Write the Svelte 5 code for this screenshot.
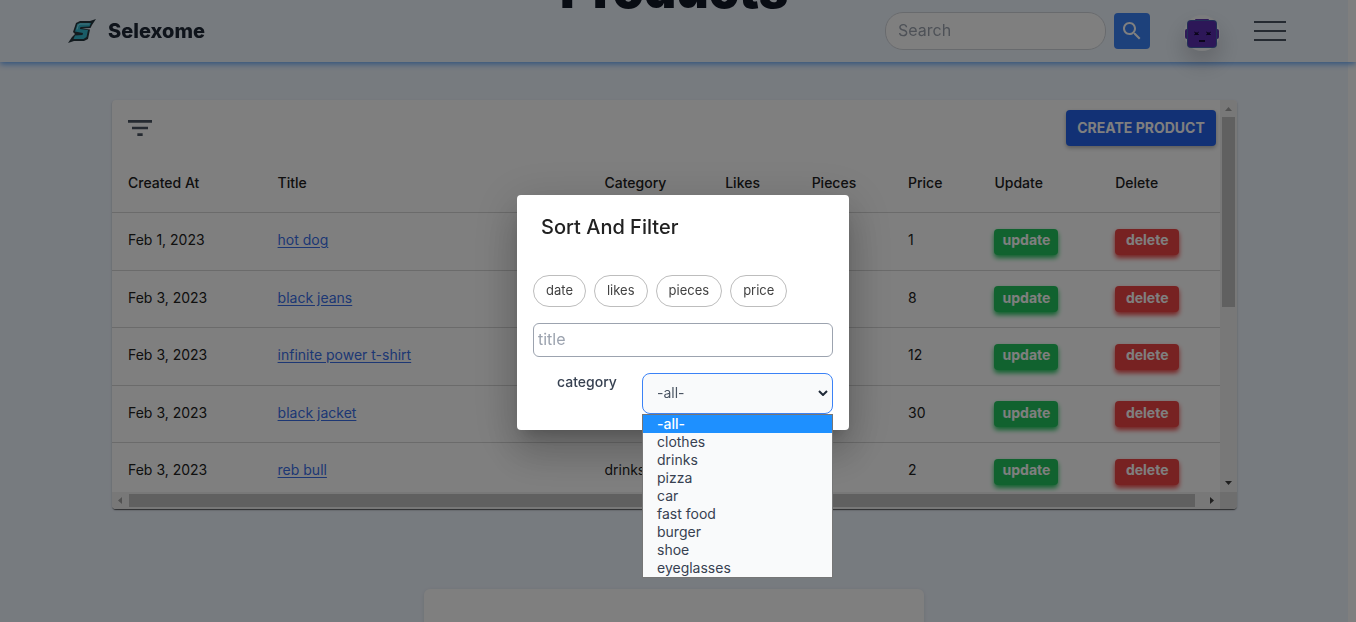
<script>
  const products = [
    { created: 'Feb 1, 2023', title: 'hot dog', category: '', price: 1 },
    { created: 'Feb 3, 2023', title: 'black jeans', category: '', price: 8 },
    { created: 'Feb 3, 2023', title: 'infinite power t-shirt', category: '', price: 12 },
    { created: 'Feb 3, 2023', title: 'black jacket', category: '', price: 30 },
    { created: 'Feb 3, 2023', title: 'reb bull', category: 'drinks', price: 2 }
  ];
  const sorts = ['date', 'likes', 'pieces', 'price'];
  const categories = ['-all-', 'clothes', 'drinks', 'pizza', 'car', 'fast food', 'burger', 'shoe', 'eyeglasses'];

  let search = $state('');
  let title = $state('');
  let category = $state('-all-');
</script>

<div class="page">
  <header>
    <a class="brand" href="#home">
      <svg class="logo" viewBox="0 0 28 24" aria-hidden="true">
        <path d="M28 0 24 6 22.500 9 14 9.500 22 10.500 20 20 16 22 6 22 0 24 4 18 7 15 5 13 8 4 12 2 22 2Z" fill="#26373f" />
        <path d="M23 4 21.500 7.500 12.500 8 11.800 10 20 11 18.500 18 15.500 20 5.500 20 7 16.500 14.500 16 15 14 7 12.500 9.300 5 12 4Z" fill="#35b8cf" />
        <path d="M21.500 5 12 5 10.300 6 9 10.500" fill="none" stroke="#8ee6f5" stroke-width="1" />
      </svg>
      <span>Selexome</span>
    </a>
    <form class="search" onsubmit={(e) => e.preventDefault()}>
      <input type="search" placeholder="Search" aria-label="Search" bind:value={search} />
      <button aria-label="Submit search">
        <svg viewBox="0 0 24 24" width="24" height="24" aria-hidden="true">
          <path fill="#fff" d="M15.5 14h-.79l-.28-.27C15.410 12.590 16 11.110 16 9.500 16 5.910 13.090 3 9.500 3S3 5.910 3 9.500 5.910 16 9.500 16c1.610 0 3.090-.59 4.230-1.570l.27.28v.79l5 4.990L20.490 19l-4.990-5zm-6 0C7.010 14 5 11.990 5 9.500S7.010 5 9.500 5 14 7.010 14 9.500 11.990 14 9.500 14z" />
        </svg>
      </button>
    </form>
    <button class="avatar" aria-label="Account">
      <svg viewBox="0 0 36 36" width="36" height="36" aria-hidden="true">
        <rect x="1" y="14" width="34" height="10" rx="2" fill="#5e35b1" />
        <rect x="11" y="4" width="14" height="5" rx="1" fill="#5e35b1" />
        <rect x="3" y="5" width="30" height="28" rx="4" fill="#4560ae" />
        <rect x="4" y="6" width="28" height="26" rx="3" fill="#5a2fb0" />
        <path d="M10 17l3 1-3 2M15 17l-2 1 2 2M22 17l3 1-3 2M27 17l-2 1 2 2M15 26h6" fill="none" stroke="#24104f" stroke-width="1" />
        <path d="M11 19h3M23 19h3M15 26h6" fill="none" stroke="#160a38" stroke-width="2" />
      </svg>
    </button>
    <button class="menu" aria-label="Menu"><i></i><i></i><i></i></button>
  </header>

  <main>
    <h1>Products</h1>

    <section class="card">
      <div class="content">
        <div class="toolbar">
          <button class="filter" aria-label="Sort and filter">
            <svg viewBox="0 0 24 24" width="32" height="32" aria-hidden="true">
              <path fill="#4b5563" d="M10 18h4v-2h-4v2zM3 6v2h18V6H3zm3 7h12v-2H6v2z" />
            </svg>
          </button>
          <button class="create">CREATE PRODUCT</button>
        </div>
        <table>
          <colgroup>
            <col class="c-date" /><col class="c-title" /><col class="c-wide" /><col class="c-slim" />
            <col class="c-mid" /><col class="c-slim" /><col class="c-wide" /><col class="c-wide" />
          </colgroup>
          <thead>
            <tr>
              <th>Created At</th><th>Title</th><th>Category</th><th>Likes</th>
              <th>Pieces</th><th>Price</th><th>Update</th><th>Delete</th>
            </tr>
          </thead>
          <tbody>
            {#each products as p}
              <tr>
                <td>{p.created}</td>
                <td><a href="#product">{p.title}</a></td>
                <td>{p.category}</td>
                <td></td>
                <td></td>
                <td>{p.price}</td>
                <td><button class="action update">update</button></td>
                <td><button class="action delete">delete</button></td>
              </tr>
            {/each}
          </tbody>
        </table>
      </div>
      <div class="bar vertical" aria-hidden="true">
        <svg viewBox="0 0 17 17"><path d="M5 11h7L8.500 7z" fill="#a3a3a3" /></svg>
        <div class="rail"><div class="thumb"></div></div>
        <svg viewBox="0 0 17 17"><path d="M5 6h7L8.500 10z" fill="#404040" /></svg>
      </div>
      <div class="bar horizontal" aria-hidden="true">
        <svg viewBox="0 0 17 17"><path d="M10 5v7L6 8.500z" fill="#a3a3a3" /></svg>
        <div class="rail"><div class="thumb"></div></div>
        <svg viewBox="0 0 17 17"><path d="M7 5v7l4-3.500z" fill="#404040" /></svg>
      </div>
      <div class="corner"></div>
    </section>

    <section class="next-card"></section>
  </main>
</div>

<div class="backdrop">
  <div class="dialog" role="dialog" aria-modal="true" aria-labelledby="dialog-title">
    <h2 id="dialog-title">Sort And Filter</h2>
    <div class="fields">
      <div class="chips">
        {#each sorts as sort}
          <button>{sort}</button>
        {/each}
      </div>
      <input class="title" type="text" placeholder="title" aria-label="title" bind:value={title} />
      <div class="category">
        <label for="category">category</label>
        <div class="picker">
          <select id="category" bind:value={category}>
            {#each categories as c}
              <option value={c}>{c}</option>
            {/each}
          </select>
          <svg class="chevron" viewBox="0 0 10 6" aria-hidden="true">
            <path d="M1 1l4 4 4-4" fill="none" stroke="#1f2937" stroke-width="2" />
          </svg>
          <ul role="listbox" aria-label="category options">
            {#each categories as c}
              <li role="option" aria-selected={c === category}>{c}</li>
            {/each}
          </ul>
        </div>
      </div>
    </div>
  </div>
</div>

<style>
  :global(body) {
    margin: 0;
    font-family: Inter, Roboto, sans-serif;
    font-size: 14px;
    color: #212121;
    background: #eff6ff;
  }
  * { box-sizing: border-box; }
  button, input, select { font: inherit; margin: 0; }
  button { border: 0; padding: 0; cursor: pointer; }
  svg { display: block; }

  .page {
    display: flow-root;
    height: 100vh;
    overflow: hidden;
    border-right: 8px solid #fff;
  }

  header {
    position: fixed;
    inset: 0 0 auto 0;
    height: 62px;
    padding: 0 70px 0 68px;
    display: flex;
    align-items: center;
    box-shadow: 0 2px 6px #60a5fa;
  }
  .brand {
    display: flex;
    align-items: center;
    gap: 12px;
    margin-right: auto;
    font-size: 20px;
    font-weight: 800;
    color: #1f2937;
    text-decoration: none;
  }
  .logo { width: 28px; height: 24px; }
  .search { display: flex; align-items: center; gap: 8px; }
  .search input {
    width: 221px;
    height: 38px;
    padding: 0 12px 2px;
    border: 1px solid #d1d5db;
    border-radius: 18px;
    background: #fff;
    font-size: 16px;
    outline: 0;
  }
  input::placeholder { color: #9ca3af; opacity: 1; }
  .search button {
    width: 36px;
    height: 36px;
    display: grid;
    place-items: center;
    border-radius: 4px;
    background: #3b82f6;
  }
  .avatar {
    width: 36px;
    height: 36px;
    margin: 4px 34px 0;
    border-radius: 50%;
    background: #f8fafc;
    box-shadow: 0 12px 24px rgba(0, 0, 0, 0.2);
  }
  .menu {
    width: 32px;
    display: grid;
    gap: 7px;
    background: none;
  }
  .menu i { height: 2px; background: #4b5563; }

  main { margin-top: -38px; }
  h1 {
    margin: 0 0 82px;
    text-align: center;
    font-size: 50px;
    line-height: 56px;
    font-weight: 900;
    color: #111827;
  }

  .card {
    margin: 0 111px 0 112px;
    display: grid;
    grid-template: 392px 17px / minmax(0, 1fr) 17px;
    overflow: hidden;
    border-radius: 4px;
    background: #fff;
    box-shadow: 0 2px 1px -1px rgba(0, 0, 0, 0.4), 0 1px 1px rgba(0, 0, 0, 0.3), 0 1px 3px rgba(0, 0, 0, 0.12);
  }
  .content { overflow: hidden; }
  .toolbar {
    display: flex;
    justify-content: space-between;
    align-items: center;
    padding: 10px 4px 8px 12px;
  }
  .filter { background: none; }
  .create {
    width: 150px;
    height: 36px;
    padding-bottom: 2px;
    border-radius: 4px;
    background: #2563eb;
    color: #fff;
    font-weight: 700;
    box-shadow: 0 2px 4px rgba(0, 0, 0, 0.3);
  }

  table { width: 100%; border-collapse: separate; border-spacing: 0; table-layout: fixed; }
  .c-date { width: 13.5%; }
  .c-title { width: 29.5%; }
  .c-wide { width: 10.9%; }
  .c-slim { width: 7.8%; }
  .c-mid { width: 8.7%; }
  th, td {
    height: 58px;
    padding: 0 0 4px 16px;
    text-align: left;
    border-bottom: 1px solid #d6d6d6;
    white-space: nowrap;
  }
  th { height: 59px; padding-bottom: 2px; font-weight: 500; }
  tr:nth-child(even) td { height: 57px; }
  td a { color: #3b6fe8; text-underline-offset: 2px; }
  .action {
    display: block;
    width: 64px;
    height: 26px;
    margin-top: 4px;
    padding-bottom: 4px;
    border-radius: 4px;
    color: #fff;
    font-weight: 700;
  }
  .update { background: #22c55e; box-shadow: 0 3px 5px #22c55e; }
  .delete { background: #ef4444; box-shadow: 0 3px 5px #ef4444; }

  .bar { display: flex; background: #f1f1f1; }
  .bar svg { width: 17px; height: 17px; flex: none; }
  .rail { flex: 1; display: flex; }
  .thumb { background: #c1c1c1; }
  .vertical { flex-direction: column; }
  .vertical .rail { padding: 0 2px; }
  .vertical .thumb { width: 100%; height: 53%; }
  .horizontal .rail { padding: 2px 0; }
  .horizontal .thumb { width: 99.3%; }
  .corner { background: #dcdcdc; }

  .next-card {
    max-width: 500px;
    height: 200px;
    margin: 80px auto 0;
    border-radius: 6px;
    background: #fff;
    box-shadow: 0 1px 4px rgba(0, 0, 0, 0.1);
  }

  .backdrop {
    position: fixed;
    inset: 0;
    padding: 3px 0 0 10px;
    display: grid;
    place-items: center;
    background: rgba(0, 0, 0, 0.5);
  }
  .dialog {
    width: 332px;
    border-radius: 4px;
    background: #fff;
    box-shadow: 0 11px 15px -7px rgba(0, 0, 0, 0.2), 0 24px 38px 3px rgba(0, 0, 0, 0.14),
      0 9px 46px 8px rgba(0, 0, 0, 0.12);
  }
  h2 {
    margin: 0;
    padding: 16px 24px;
    font-size: 20px;
    line-height: 32px;
    font-weight: 500;
  }
  .fields { padding: 16px; display: grid; gap: 16px; }
  .chips { display: flex; gap: 8px; }
  .chips button {
    height: 32px;
    padding: 0 12px 2px;
    border: 1px solid #bdbdbd;
    border-radius: 16px;
    background: #fff;
    color: #424242;
    font-size: 13px;
  }
  .title {
    width: 100%;
    height: 34px;
    padding: 0 4px 2px;
    border: 1px solid #9ca3af;
    border-radius: 6px;
    font-size: 16px;
    outline: 0;
  }
  .category {
    display: flex;
    justify-content: space-between;
    padding-left: 24px;
    color: #374151;
  }
  .category label { line-height: 18px; font-weight: 500; }
  .picker { position: relative; width: 191px; }
  select {
    display: block;
    width: 100%;
    height: 41px;
    padding: 0 14px 2px;
    appearance: none;
    border: 1px solid #3b82f6;
    border-radius: 8px;
    background: #f9fafb;
    color: #4b5563;
    outline: 0;
  }
  .chevron {
    position: absolute;
    top: 17px;
    right: 5px;
    width: 10px;
    height: 6px;
    pointer-events: none;
  }
  ul {
    position: absolute;
    top: 100%;
    left: 0;
    right: 0;
    margin: 0;
    padding: 0;
    list-style: none;
    border: 1px solid #767676;
    background: #f9fafb;
  }
  li { padding: 0 14px; line-height: 18px; }
  li[aria-selected='true'] { background: #1e90ff; color: #fff; font-weight: 500; }
</style>
